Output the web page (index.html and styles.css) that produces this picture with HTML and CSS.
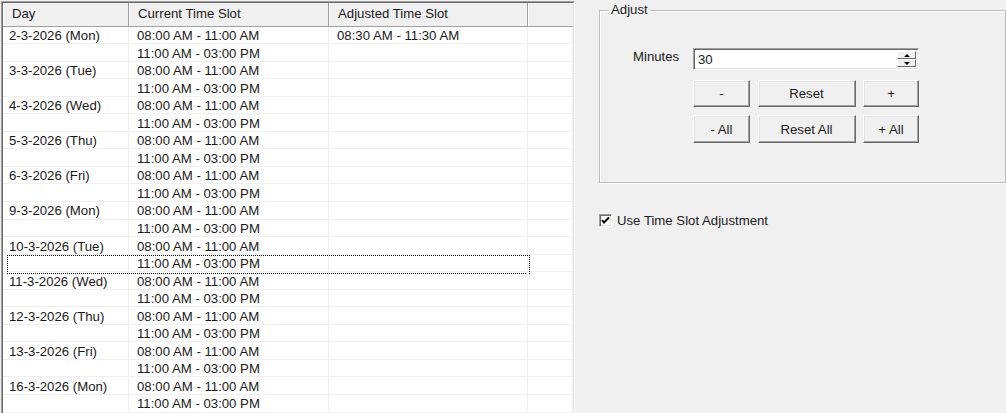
FILE: index.html
```html
<!DOCTYPE html>
<html lang="en">
<head>
    <meta charset="UTF-8">
    <title>Time Slot Adjustment</title>
    <link rel="stylesheet" href="styles.css">
</head>
<body>
    <div class="list">
        <div class="list-inner">
            <div class="list-head">
                <div class="head-cell first">Day</div>
                <div class="head-cell">Current Time Slot</div>
                <div class="head-cell">Adjusted Time Slot</div>
                <div class="head-cell filler"></div>
            </div>
            <div class="row"><div class="cell first">2-3-2026 (Mon)</div><div class="cell">08:00 AM - 11:00 AM</div><div class="cell">08:30 AM - 11:30 AM</div><div class="cell"></div></div>
            <div class="row"><div class="cell first"></div><div class="cell">11:00 AM - 03:00 PM</div><div class="cell"></div><div class="cell"></div></div>
            <div class="row"><div class="cell first">3-3-2026 (Tue)</div><div class="cell">08:00 AM - 11:00 AM</div><div class="cell"></div><div class="cell"></div></div>
            <div class="row"><div class="cell first"></div><div class="cell">11:00 AM - 03:00 PM</div><div class="cell"></div><div class="cell"></div></div>
            <div class="row"><div class="cell first">4-3-2026 (Wed)</div><div class="cell">08:00 AM - 11:00 AM</div><div class="cell"></div><div class="cell"></div></div>
            <div class="row"><div class="cell first"></div><div class="cell">11:00 AM - 03:00 PM</div><div class="cell"></div><div class="cell"></div></div>
            <div class="row"><div class="cell first">5-3-2026 (Thu)</div><div class="cell">08:00 AM - 11:00 AM</div><div class="cell"></div><div class="cell"></div></div>
            <div class="row"><div class="cell first"></div><div class="cell">11:00 AM - 03:00 PM</div><div class="cell"></div><div class="cell"></div></div>
            <div class="row"><div class="cell first">6-3-2026 (Fri)</div><div class="cell">08:00 AM - 11:00 AM</div><div class="cell"></div><div class="cell"></div></div>
            <div class="row"><div class="cell first"></div><div class="cell">11:00 AM - 03:00 PM</div><div class="cell"></div><div class="cell"></div></div>
            <div class="row"><div class="cell first">9-3-2026 (Mon)</div><div class="cell">08:00 AM - 11:00 AM</div><div class="cell"></div><div class="cell"></div></div>
            <div class="row"><div class="cell first"></div><div class="cell">11:00 AM - 03:00 PM</div><div class="cell"></div><div class="cell"></div></div>
            <div class="row"><div class="cell first">10-3-2026 (Tue)</div><div class="cell">08:00 AM - 11:00 AM</div><div class="cell"></div><div class="cell"></div></div>
            <div class="row focused"><div class="cell first"></div><div class="cell">11:00 AM - 03:00 PM</div><div class="cell"></div><div class="cell"></div></div>
            <div class="row"><div class="cell first">11-3-2026 (Wed)</div><div class="cell">08:00 AM - 11:00 AM</div><div class="cell"></div><div class="cell"></div></div>
            <div class="row"><div class="cell first"></div><div class="cell">11:00 AM - 03:00 PM</div><div class="cell"></div><div class="cell"></div></div>
            <div class="row"><div class="cell first">12-3-2026 (Thu)</div><div class="cell">08:00 AM - 11:00 AM</div><div class="cell"></div><div class="cell"></div></div>
            <div class="row"><div class="cell first"></div><div class="cell">11:00 AM - 03:00 PM</div><div class="cell"></div><div class="cell"></div></div>
            <div class="row"><div class="cell first">13-3-2026 (Fri)</div><div class="cell">08:00 AM - 11:00 AM</div><div class="cell"></div><div class="cell"></div></div>
            <div class="row"><div class="cell first"></div><div class="cell">11:00 AM - 03:00 PM</div><div class="cell"></div><div class="cell"></div></div>
            <div class="row"><div class="cell first">16-3-2026 (Mon)</div><div class="cell">08:00 AM - 11:00 AM</div><div class="cell"></div><div class="cell"></div></div>
            <div class="row"><div class="cell first"></div><div class="cell">11:00 AM - 03:00 PM</div><div class="cell"></div><div class="cell"></div></div>
        </div>
    </div>

    <div class="side">
        <fieldset class="group">
            <legend>Adjust</legend>
            <div class="minutes-row">
                <label class="minutes-label" for="minutes">Minutes</label>
                <div class="spin-box">
                    <span class="spin-value" id="minutes">30</span>
                    <span class="spin-buttons">
                        <span class="spin-btn"><span class="arrow up"></span></span>
                        <span class="spin-btn"><span class="arrow down"></span></span>
                    </span>
                </div>
            </div>
            <div class="buttons">
                <button class="btn">-</button>
                <button class="btn">Reset</button>
                <button class="btn">+</button>
                <button class="btn">- All</button>
                <button class="btn">Reset All</button>
                <button class="btn">+ All</button>
            </div>
        </fieldset>

        <div class="check-row">
            <span class="check-box">
                <svg width="11" height="11" viewBox="0 0 11 11">
                    <path d="M2 5 L4 7.5 L9 2.5" fill="none" stroke="#000" stroke-width="2"/>
                </svg>
            </span>
            <span class="check-label">Use Time Slot Adjustment</span>
        </div>
    </div>
</body>
</html>
```

FILE: styles.css
```css
* {
    box-sizing: border-box;
}
body {
    margin: 0;
    background-color: #f0f0f0;
    font-family: "Liberation Sans", Arial, sans-serif;
    font-size: 13.2px;
    color: #1a1a1a;
    display: flex;
    height: 413px;
    overflow: hidden;
}

/* list view */
.list {
    width: 574px;
    margin-top: 1px;
    margin-left: 1px;
    height: 430px;
    border: 1px solid;
    border-color: #a0a0a0 #ffffff #ffffff #a0a0a0;
    flex-shrink: 0;
}
.list-inner {
    height: 100%;
    background: #fff;
    border: 1px solid;
    border-color: #696969 #e3e3e3 #e3e3e3 #696969;
}
.list-head,
.row {
    display: grid;
    grid-template-columns: 126px 200px 199px 1fr;
}
.list-head {
    height: 23.5px;
    background: #f0f0f0;
    border-bottom: 1px solid #a0a0a0;
}
.head-cell {
    padding-left: 8px;
    line-height: 22px;
    border-right: 1px solid #a0a0a0;
    border-left: 1px solid #fff;
    white-space: nowrap;
}
.head-cell.filler {
    border-right: none;
}
.row {
    position: relative;
    height: 17.55px;
    border-bottom: 1px solid #f0f0f0;
}
.cell {
    padding-left: 8px;
    padding-top: 1.5px;
    line-height: 16px;
    border-right: 1px solid #f0f0f0;
    white-space: nowrap;
    overflow: hidden;
}
.cell.first {
    padding-left: 6px;
}
.row.focused::after {
    content: "";
    position: absolute;
    left: 4px;
    top: 0;
    width: 521px;
    height: 17px;
    border: 1px dotted #000;
}

/* right side */
.side {
    flex: 1;
    padding-left: 24px;
}
.group {
    margin: 0;
    padding: 28px 0 39px 0;
    border: 1px solid #bcbcbc;
    box-shadow: inset 1px 1px 0 #fff, 1px 1px 0 #fff;
}
.group legend {
    margin-left: 9px;
    padding: 0 2px;
    line-height: 20px;
}
.minutes-row {
    display: flex;
    align-items: center;
    padding-left: 33px;
}
.minutes-label {
    width: 60px;
    margin-top: -6px;
}
.spin-box {
    width: 226px;
    height: 22px;
    background: #fff;
    border: 1px solid;
    border-color: #a0a0a0 #fff #fff #a0a0a0;
    box-shadow: inset 1px 1px 0 #696969, inset -1px -1px 0 #e3e3e3;
    display: flex;
}
.spin-value {
    flex: 1;
    padding-left: 4px;
    padding-top: 3px;
}
.spin-buttons {
    display: flex;
    flex-direction: column;
    width: 19px;
    margin: 2px 2px 2px 0;
}
.spin-btn {
    flex: 1;
    background: #f0f0f0;
    border: 1px solid;
    border-color: #fff #696969 #696969 #fff;
    display: flex;
    align-items: center;
    justify-content: center;
}
.arrow {
    width: 0;
    height: 0;
    border-left: 3px solid transparent;
    border-right: 3px solid transparent;
}
.arrow.up {
    border-bottom: 3px solid #000;
}
.arrow.down {
    border-top: 3px solid #000;
}
.buttons {
    display: grid;
    grid-template-columns: 57px 98px 56px;
    grid-template-rows: 27px 28px;
    column-gap: 7.5px;
    row-gap: 8px;
    margin-left: 93px;
    margin-top: 10px;
}
.btn {
    font: inherit;
    color: #1a1a1a;
    background: #f0f0f0;
    border: 1px solid;
    border-color: #fff #696969 #696969 #fff;
    box-shadow: inset -1px -1px 0 #a0a0a0, inset 1px 1px 0 #e3e3e3;
    padding: 0;
}
.check-row {
    display: flex;
    align-items: center;
    margin-top: 30px;
}
.check-box {
    width: 13px;
    height: 13px;
    background: #fff;
    border: 1px solid;
    border-color: #a0a0a0 #fff #fff #a0a0a0;
    box-shadow: inset 1px 1px 0 #696969, inset -1px -1px 0 #e3e3e3;
    display: flex;
    align-items: center;
    justify-content: center;
}
.check-box svg {
    display: block;
}
.check-label {
    margin-left: 5px;
}
```
